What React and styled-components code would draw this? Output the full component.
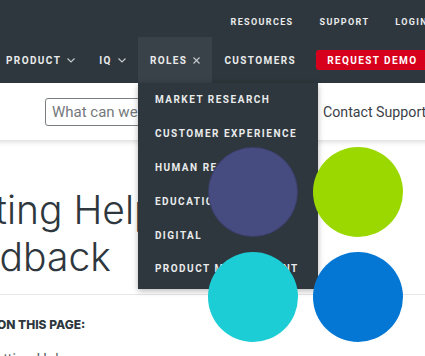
import React from 'react';
import styled, { createGlobalStyle } from 'styled-components';

const GlobalStyle = createGlobalStyle`
  body {
    margin: 0;
    overflow: hidden;
    background: #fff;
    font-family: Roboto, Inter, sans-serif;
  }
`

const Page = styled.div`
  width: 520px;
  margin-left: -70px;
`

const Header = styled.header`
  background: #2e373d;
  color: #e9ebec;
`

const TopNav = styled.nav`
  height: 37px;
  display: flex;
  justify-content: flex-end;
  align-items: flex-end;
  gap: 26px;
  padding: 0 22px 9px 0;
  box-sizing: border-box;
`

const TopLink = styled.span`
  font-size: 9px;
  font-weight: 700;
  letter-spacing: 1.35px;
  line-height: 11px;
  white-space: nowrap;
`

const MainNav = styled.nav`
  height: 46px;
  display: flex;
  align-items: stretch;
  padding-left: 64px;
`

const NavItem = styled.div`
  position: relative;
  flex-shrink: 0;
  display: flex;
  align-items: center;
  gap: 6px;
  padding: 0 12px;
  font-size: 10px;
  font-weight: 700;
  letter-spacing: 1.4px;
  white-space: nowrap;
  background: ${p => (p.$active ? '#3a4249' : 'transparent')};
`

const DemoButton = styled.div`
  flex-shrink: 0;
  align-self: center;
  margin-left: 8px;
  height: 20px;
  padding: 0 11px;
  display: flex;
  align-items: center;
  background: #d6001c;
  color: #fff;
  border-radius: 3px;
  font-size: 10px;
  font-weight: 700;
  letter-spacing: 1.4px;
  white-space: nowrap;
`

const Dropdown = styled.ul`
  position: absolute;
  top: 100%;
  left: 0;
  z-index: 10;
  width: 180px;
  margin: 0;
  padding: 0 0 3px;
  list-style: none;
  background: #2e373d;
  box-shadow: 0 2px 6px rgba(0, 0, 0, 0.28);
`

const DropItem = styled.li`
  height: 33.8px;
  display: flex;
  align-items: center;
  padding-left: 17px;
  color: #e9ebec;
  font-size: 10px;
  font-weight: 700;
  letter-spacing: 1.5px;
  white-space: nowrap;
`

const SearchBand = styled.div`
  height: 57px;
  display: flex;
  align-items: center;
  gap: 16px;
  padding-left: 115px;
  background: #fff;
  box-shadow: 0 2px 5px rgba(0, 0, 0, 0.14);
  position: relative;
`

const SearchInput = styled.input`
  flex-shrink: 0;
  width: 262px;
  height: 28px;
  box-sizing: border-box;
  padding: 0 6px;
  border: 1px solid #7a7f84;
  border-radius: 3px;
  font-family: Roboto, sans-serif;
  font-size: 15px;
  color: #333;
  &::placeholder {
    color: #74787c;
  }
`

const ContactLink = styled.span`
  font-family: Roboto, sans-serif;
  font-size: 14.2px;
  color: #3b4147;
  white-space: nowrap;
`

const Hero = styled.section`
  padding: 46px 0 14px 3px;
  border-bottom: 1px solid #e4e6e8;
`

const Title = styled.h1`
  margin: 0;
  max-width: 400px;
  font-family: Inter, sans-serif;
  font-size: 39px;
  font-weight: 300;
  line-height: 47px;
  color: #2e373d;
`

const Sidebar = styled.aside`
  padding: 22px 0 0 67px;
`

const SideHeading = styled.div`
  font-family: Inter, sans-serif;
  font-size: 12px;
  font-weight: 800;
  line-height: 16px;
  color: #2e373d;
`

const SideLink = styled.div`
  margin: 17px 0 0 -12px;
  font-family: Inter, sans-serif;
  font-size: 14px;
  color: #555b60;
`

const Circles = styled.div`
  position: absolute;
  left: 208px;
  top: 147px;
  z-index: 20;
  display: grid;
  grid-template-columns: 90px 90px;
  gap: 15px;
`

const Dot = styled.div`
  width: 90px;
  height: 90px;
  border-radius: 50%;
  background: ${p => p.$color};
  box-shadow: ${p => (p.$ring ? 'inset 0 0 0 1px rgba(0,0,0,0.18)' : 'none')};
`

const Chevron = () => (
  <svg width="8" height="5" viewBox="0 0 8 5" fill="none" stroke="#c9cdd0" strokeWidth="1.1">
    <polyline points="0.5,0.5 4,4 7.5,0.5" />
  </svg>
)

const Close = () => (
  <svg width="7" height="7" viewBox="0 0 7 7" fill="none" stroke="#c9cdd0" strokeWidth="1.1">
    <line x1="0.5" y1="0.5" x2="6.5" y2="6.5" />
    <line x1="6.5" y1="0.5" x2="0.5" y2="6.5" />
  </svg>
)

const roles = [
  'MARKET RESEARCH',
  'CUSTOMER EXPERIENCE',
  'HUMAN RESOURCES',
  'EDUCATION',
  'DIGITAL',
  'PRODUCT MANAGEMENT',
]

export default function App() {
  return (
    <>
      <GlobalStyle />
      <Page>
        <Header>
          <TopNav>
            <TopLink>RESOURCES</TopLink>
            <TopLink>SUPPORT</TopLink>
            <TopLink>LOGIN</TopLink>
          </TopNav>
          <MainNav>
            <NavItem>PRODUCT <Chevron /></NavItem>
            <NavItem>IQ <Chevron /></NavItem>
            <NavItem $active>
              ROLES <Close />
              <Dropdown>
                {roles.map(r => <DropItem key={r}>{r}</DropItem>)}
              </Dropdown>
            </NavItem>
            <NavItem>CUSTOMERS</NavItem>
            <DemoButton>REQUEST DEMO</DemoButton>
          </MainNav>
        </Header>
        <SearchBand>
          <SearchInput placeholder="What can we help you find?" />
          <ContactLink>Contact Support</ContactLink>
        </SearchBand>
        <Hero>
          <Title>Getting Help and Feedback</Title>
        </Hero>
        <Sidebar>
          <SideHeading>ON THIS PAGE:</SideHeading>
          <SideLink>Getting Help</SideLink>
        </Sidebar>
      </Page>
      <Circles>
        <Dot $color="#474c80" $ring />
        <Dot $color="#9bd800" />
        <Dot $color="#1ccdd5" />
        <Dot $color="#0477d4" />
      </Circles>
    </>
  )
}
